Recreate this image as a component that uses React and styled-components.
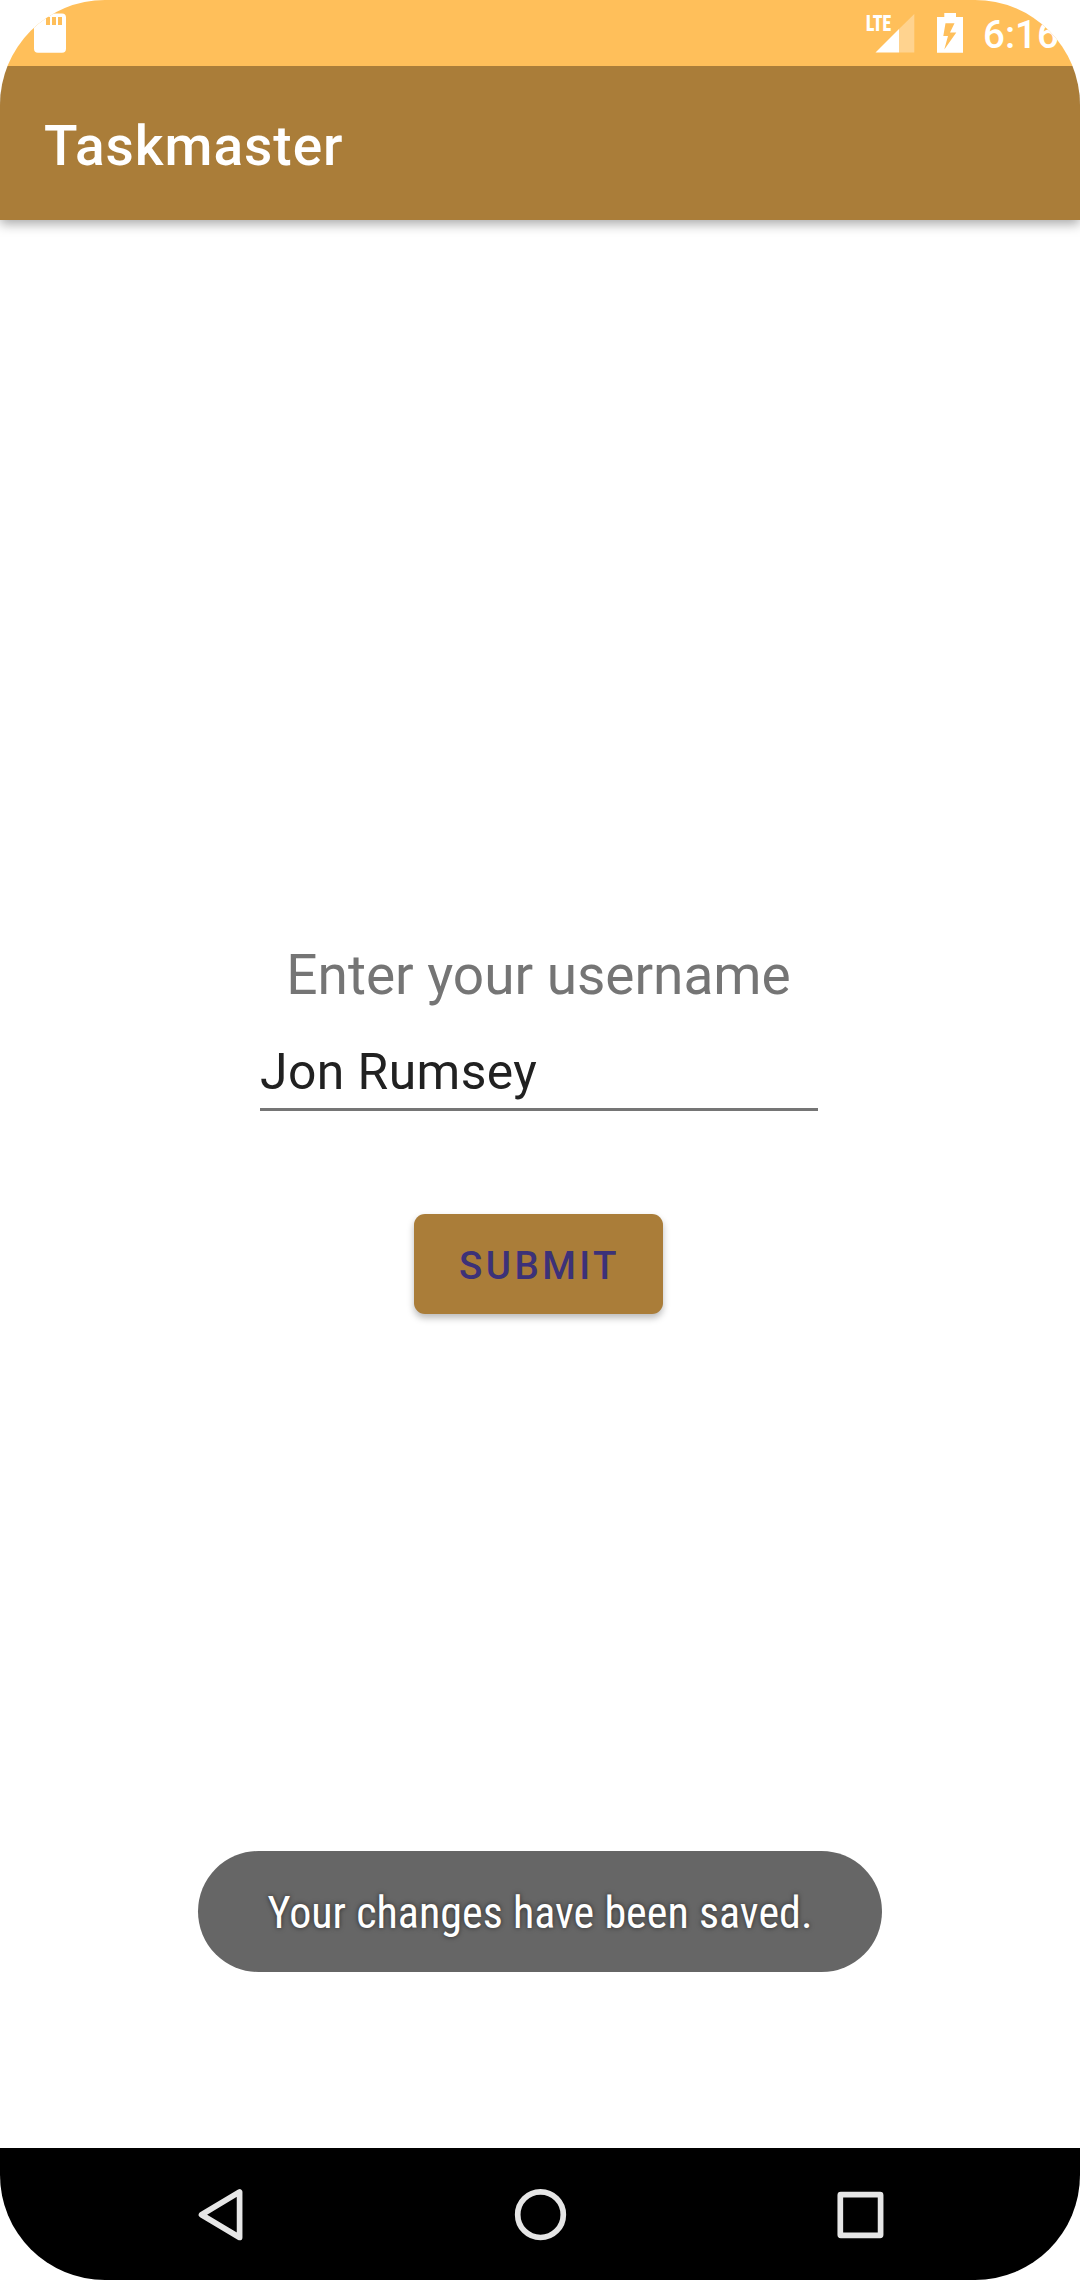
import React from "react";
import styled, { createGlobalStyle } from "styled-components";

const GlobalStyle = createGlobalStyle`
  *, *::before, *::after { box-sizing: border-box; }
  body {
    margin: 0;
    background: #ffffff;
    font-family: Roboto, sans-serif;
  }
`;

const Screen = styled.div`
  position: relative;
  display: flex;
  flex-direction: column;
  width: 1080px;
  height: 2280px;
  border-radius: 105px;
  overflow: hidden;
  background: #ffffff;
`;

const StatusBar = styled.header`
  display: flex;
  flex: none;
  align-items: center;
  justify-content: space-between;
  height: 66px;
  padding: 0 21px 0 34px;
  background: #ffbf5a;
  color: #ffffff;
`;

const StatusGroup = styled.div`
  display: flex;
  align-items: center;
  height: 66px;
`;

const StatusIcon = styled.svg`
  display: block;
  flex: none;
  width: ${(p) => p.$width}px;
  height: 66px;
  margin-right: ${(p) => p.$gap || 0}px;
`;

const Signal = styled.div`
  position: relative;
  margin-right: 22.5px;
`;

const NetworkType = styled.span`
  position: absolute;
  left: 0;
  top: 11px;
  font-family: "Roboto Condensed", Roboto, sans-serif;
  font-size: 22.5px;
  font-stretch: condensed;
  font-weight: 900;
  line-height: 24px;
  transform: scaleX(0.78);
  transform-origin: left;
`;

const Clock = styled.span`
  width: 76px;
  padding-top: 4px;
  font-size: 38.5px;
  font-weight: 500;
  line-height: 66px;
`;

const AppBar = styled.div`
  position: relative;
  display: flex;
  flex: none;
  align-items: center;
  height: 154px;
  padding: 6px 44px 0;
  background: #aa7d39;
  box-shadow: 0 4px 11px rgba(0, 0, 0, 0.34);
  clip-path: inset(0 0 -30px 0);
`;

const Title = styled.h1`
  margin: 0;
  color: #ffffff;
  font-size: 55px;
  font-weight: 500;
  line-height: 64px;
  letter-spacing: 0.018em;
`;

const Content = styled.main`
  display: flex;
  flex: 1;
  flex-direction: column;
  align-items: center;
  padding-top: 722px;
`;

const Label = styled.label`
  margin-right: 3px;
  color: #757575;
  font-size: 55px;
  line-height: 66px;
  letter-spacing: -0.03px;
`;

const Field = styled.div`
  width: 558px;
  height: 103px;
  padding-top: 34px;
  margin-right: 2px;
  border-bottom: 3px solid #757575;
  color: #212121;
  font-size: 49.8px;
  line-height: 60px;
  letter-spacing: 0.009em;
  white-space: nowrap;
`;

const SubmitButton = styled.button`
  width: 249px;
  height: 100px;
  margin: 103px 3px 0 0;
  padding: 3px 0 0 2px;
  border: 0;
  border-radius: 11px;
  background: #aa7d39;
  color: #3c3178;
  box-shadow: 0 4px 7px rgba(0, 0, 0, 0.27);
  font-family: inherit;
  font-size: 38.5px;
  font-weight: 500;
  letter-spacing: 0.0893em;
`;

const Toast = styled.div`
  position: absolute;
  left: 198px;
  top: 1851px;
  display: flex;
  align-items: center;
  justify-content: center;
  width: 684px;
  height: 121px;
  padding-top: 3px;
  border-radius: 61px;
  background: #666666;
  color: #ffffff;
`;

const ToastText = styled.span`
  font-family: "Roboto Condensed", Roboto, sans-serif;
  font-size: 44px;
  font-stretch: condensed;
  line-height: 52px;
  letter-spacing: 0.04px;
  white-space: nowrap;
  text-shadow: 0 0 5px rgba(0, 0, 0, 0.6);
`;

const NavBar = styled.nav`
  display: flex;
  flex: none;
  align-items: center;
  justify-content: space-between;
  height: 132px;
  padding: 0 189px;
  background: #000000;
`;

const NavIcon = styled.svg`
  display: block;
  width: 64px;
  height: 64px;
  fill: none;
  stroke: #e6e6e6;
  stroke-width: 5.7;
  stroke-linejoin: round;
`;

export default function App() {
  return (
    <>
      <GlobalStyle />
      <Screen>
        <StatusBar>
          <StatusIcon $width={32} viewBox="34 0 32 66">
            <path
              fill="#fff"
              fillRule="evenodd"
              d="M46 13.4H62Q66 13.4 66 17.4V48.7Q66 52.7 62 52.7H38Q34 52.7 34 48.7V25.4ZM46 17V25H50V17ZM52 17V25H56V17ZM58 17V25H62V17Z"
            />
          </StatusIcon>
          <StatusGroup>
            <Signal>
              <StatusIcon $width={48.5} viewBox="866 0 48.5 66">
                <path fill="#fff" fillOpacity="0.32" d="M899 29V52.6H914.3V14Z" />
                <path fill="#fff" d="M875.5 52.6L899 29V52.6Z" />
              </StatusIcon>
              <NetworkType>LTE</NetworkType>
            </Signal>
            <StatusIcon $width={26} $gap={20} viewBox="937 0 26 66">
              <path
                fill="#fff"
                fillRule="evenodd"
                d="M944.3 13H956V17H963V52.7H937V17H944.3ZM945.5 23.3L943.3 36H948L944.3 49.5L956.3 32.5H950L954.5 23.3Z"
              />
            </StatusIcon>
            <Clock>6:16</Clock>
          </StatusGroup>
        </StatusBar>
        <AppBar>
          <Title>Taskmaster</Title>
        </AppBar>
        <Content>
          <Label>Enter your username</Label>
          <Field>Jon Rumsey</Field>
          <SubmitButton>SUBMIT</SubmitButton>
        </Content>
        <NavBar>
          <NavIcon viewBox="0 0 64 64">
            <path d="M12.5 32.7L50.6 9.9V55.5Z" />
          </NavIcon>
          <NavIcon viewBox="0 0 64 64">
            <circle cx="32.5" cy="32.7" r="22.8" />
          </NavIcon>
          <NavIcon viewBox="0 0 64 64">
            <rect x="13.3" y="12.7" width="40.3" height="40.6" rx="0.5" />
          </NavIcon>
        </NavBar>
        <Toast>
          <ToastText>Your changes have been saved.</ToastText>
        </Toast>
      </Screen>
    </>
  );
}
